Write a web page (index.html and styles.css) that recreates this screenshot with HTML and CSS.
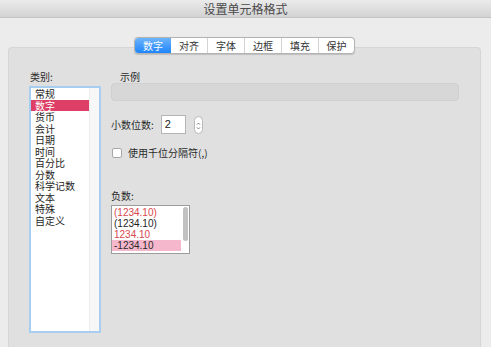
FILE: index.html
```html
<!DOCTYPE html>
<html lang="zh">
<head>
<meta charset="utf-8">
<title>设置单元格格式</title>
<link rel="stylesheet" href="styles.css">
</head>
<body>
<div class="window">
  <div class="titlebar">设置单元格格式</div>
  <div class="tabs">
    <div class="tab active">数字</div>
    <div class="tab">对齐</div>
    <div class="tab">字体</div>
    <div class="tab">边框</div>
    <div class="tab">填充</div>
    <div class="tab last">保护</div>
  </div>
  <div class="panel">
    <div class="left">
      <div class="label cat-label">类别:</div>
      <div class="catlist">
        <div class="items">
          <div class="item">常规</div>
          <div class="item sel">数字</div>
          <div class="item">货币</div>
          <div class="item">会计</div>
          <div class="item">日期</div>
          <div class="item">时间</div>
          <div class="item">百分比</div>
          <div class="item">分数</div>
          <div class="item">科学记数</div>
          <div class="item">文本</div>
          <div class="item">特殊</div>
          <div class="item">自定义</div>
        </div>
        <div class="track"></div>
      </div>
    </div>
    <div class="right">
      <div class="label sample-label">示例</div>
      <div class="sample"></div>
      <div class="decimals">
        <span class="label">小数位数:</span>
        <div class="input">2</div>
        <div class="stepper">
          <svg width="9" height="18" viewBox="0 0 9 18">
            <path d="M2.6 7.2 L4.5 5.2 L6.4 7.2" fill="none" stroke="#555" stroke-width="0.9"/>
            <path d="M2.6 10.8 L4.5 12.8 L6.4 10.8" fill="none" stroke="#555" stroke-width="0.9"/>
          </svg>
        </div>
      </div>
      <div class="check-row">
        <div class="checkbox"></div>
        <span class="label">使用千位分隔符(,)</span>
      </div>
      <div class="label neg-label">负数:</div>
      <div class="neglist">
        <div class="negitems">
          <div class="neg red">(1234.10)</div>
          <div class="neg">(1234.10)</div>
          <div class="neg red">1234.10</div>
          <div class="neg selneg">-1234.10</div>
        </div>
        <div class="negtrack"><div class="thumb"></div></div>
      </div>
    </div>
  </div>
</div>
</body>
</html>
```
FILE: styles.css
```css
html, body {
  margin: 0;
  padding: 0;
}
body {
  width: 491px;
  height: 347px;
  overflow: hidden;
  background: #ececec;
  font-family: "Noto Sans CJK SC", "Liberation Sans", sans-serif;
  color: #222;
}
.window {
  width: 491px;
  height: 347px;
  display: flex;
  flex-direction: column;
}
.titlebar {
  height: 17px;
  flex: none;
  background: linear-gradient(#ebebeb, #d3d3d3);
  border-bottom: 1px solid #c4c4c4;
  text-align: center;
  font-size: 12px;
  line-height: 18px;
  color: #4a4a4a;
}
.tabs {
  position: relative;
  z-index: 2;
  align-self: flex-start;
  margin: 19px 0 0 134px;
  display: flex;
  height: 15px;
  border: 0.5px solid #b3b3b3;
  border-radius: 4px;
  background: #fff;
  box-shadow: 0 0.5px 1px rgba(0,0,0,0.15);
}
.tab {
  width: 37px;
  text-align: center;
  font-size: 10px;
  line-height: 15px;
  color: #333;
  border-right: 1px solid #d4d4d4;
  box-sizing: border-box;
}
.tab.last {
  border-right: none;
  width: 35px;
}
.tab.active {
  background: linear-gradient(#6db4fb, #1f85fb);
  color: #fff;
  border-radius: 3.5px 0 0 3.5px;
  border-right: none;
  width: 36px;
}
.panel {
  margin: -7px 10px 0 8px;
  flex: 1;
  background: #e0e0e0;
  border: 1px solid #d6d6d6;
  border-bottom: none;
  border-radius: 4px 4px 0 0;
  display: flex;
  padding: 23px 0 0 20px;
}
.label {
  font-size: 10px;
  line-height: 12px;
  color: #2a2a2a;
}
.left {
  width: 72px;
  display: flex;
  flex-direction: column;
}
.cat-label {
  margin-left: 1px;
}
.catlist {
  margin-top: 3px;
  height: 243px;
  border: 2px solid #a7cdf1;
  background: #fff;
  display: flex;
}
.items {
  flex: 1;
  padding-top: 0;
}
.item {
  font-size: 10px;
  line-height: 11.5px;
  height: 11.5px;
  padding-left: 4px;
  color: #1e1e1e;
}
.item.sel {
  background: #de3f66;
  color: #fff;
}
.track {
  width: 9px;
  background: #f7f7f7;
  border-left: 1px solid #ececec;
}
.right {
  margin-left: 10px;
  width: 348px;
  display: flex;
  flex-direction: column;
}
.sample-label {
  margin-left: 9px;
}
.sample {
  margin-top: 0;
  height: 16px;
  border: 0.5px solid #d0d0d0;
  border-radius: 4px;
  background: #d7d7d7;
}
.decimals {
  margin-top: 14px;
  display: flex;
  align-items: center;
  height: 19px;
}
.input {
  margin-left: 7px;
  width: 22px;
  height: 17px;
  border: 1px solid #b5b5b5;
  background: #fff;
  font-family: "Liberation Sans", sans-serif;
  font-size: 11px;
  line-height: 17px;
  padding-left: 3px;
  box-sizing: content-box;
  width: 20px;
}
.stepper {
  margin-left: 8px;
  width: 9px;
  height: 18px;
  background: #fff;
  border: 0.5px solid #b8b8b8;
  border-radius: 5px;
  box-sizing: border-box;
  display: flex;
}
.check-row {
  margin-top: 14px;
  display: flex;
  align-items: center;
  height: 10px;
  padding-left: 1px;
}
.checkbox {
  width: 10px;
  height: 10px;
  box-sizing: border-box;
  border: 1px solid #a8a8a8;
  border-radius: 2px;
  background: #fff;
  margin-right: 6px;
}
.neg-label {
  margin-top: 32px;
}
.neglist {
  margin-top: 3px;
  width: 79px;
  height: 49px;
  box-sizing: border-box;
  border: 1px solid #9c9c9c;
  background: #fff;
  display: flex;
}
.negitems {
  flex: 1;
  padding-top: 1px;
}
.neg {
  font-family: "Liberation Sans", sans-serif;
  font-size: 10px;
  line-height: 11px;
  height: 11px;
  padding-left: 2px;
  color: #1e1e1e;
}
.neg.red {
  color: #d9474e;
}
.neg.selneg {
  background: #f4b7cc;
  color: #2a2a2a;
}
.negtrack {
  width: 8px;
  padding: 1px 1px 0 2px;
  box-sizing: border-box;
}
.thumb {
  width: 5px;
  height: 34px;
  border-radius: 3px;
  background: #c2c2c2;
}
```
